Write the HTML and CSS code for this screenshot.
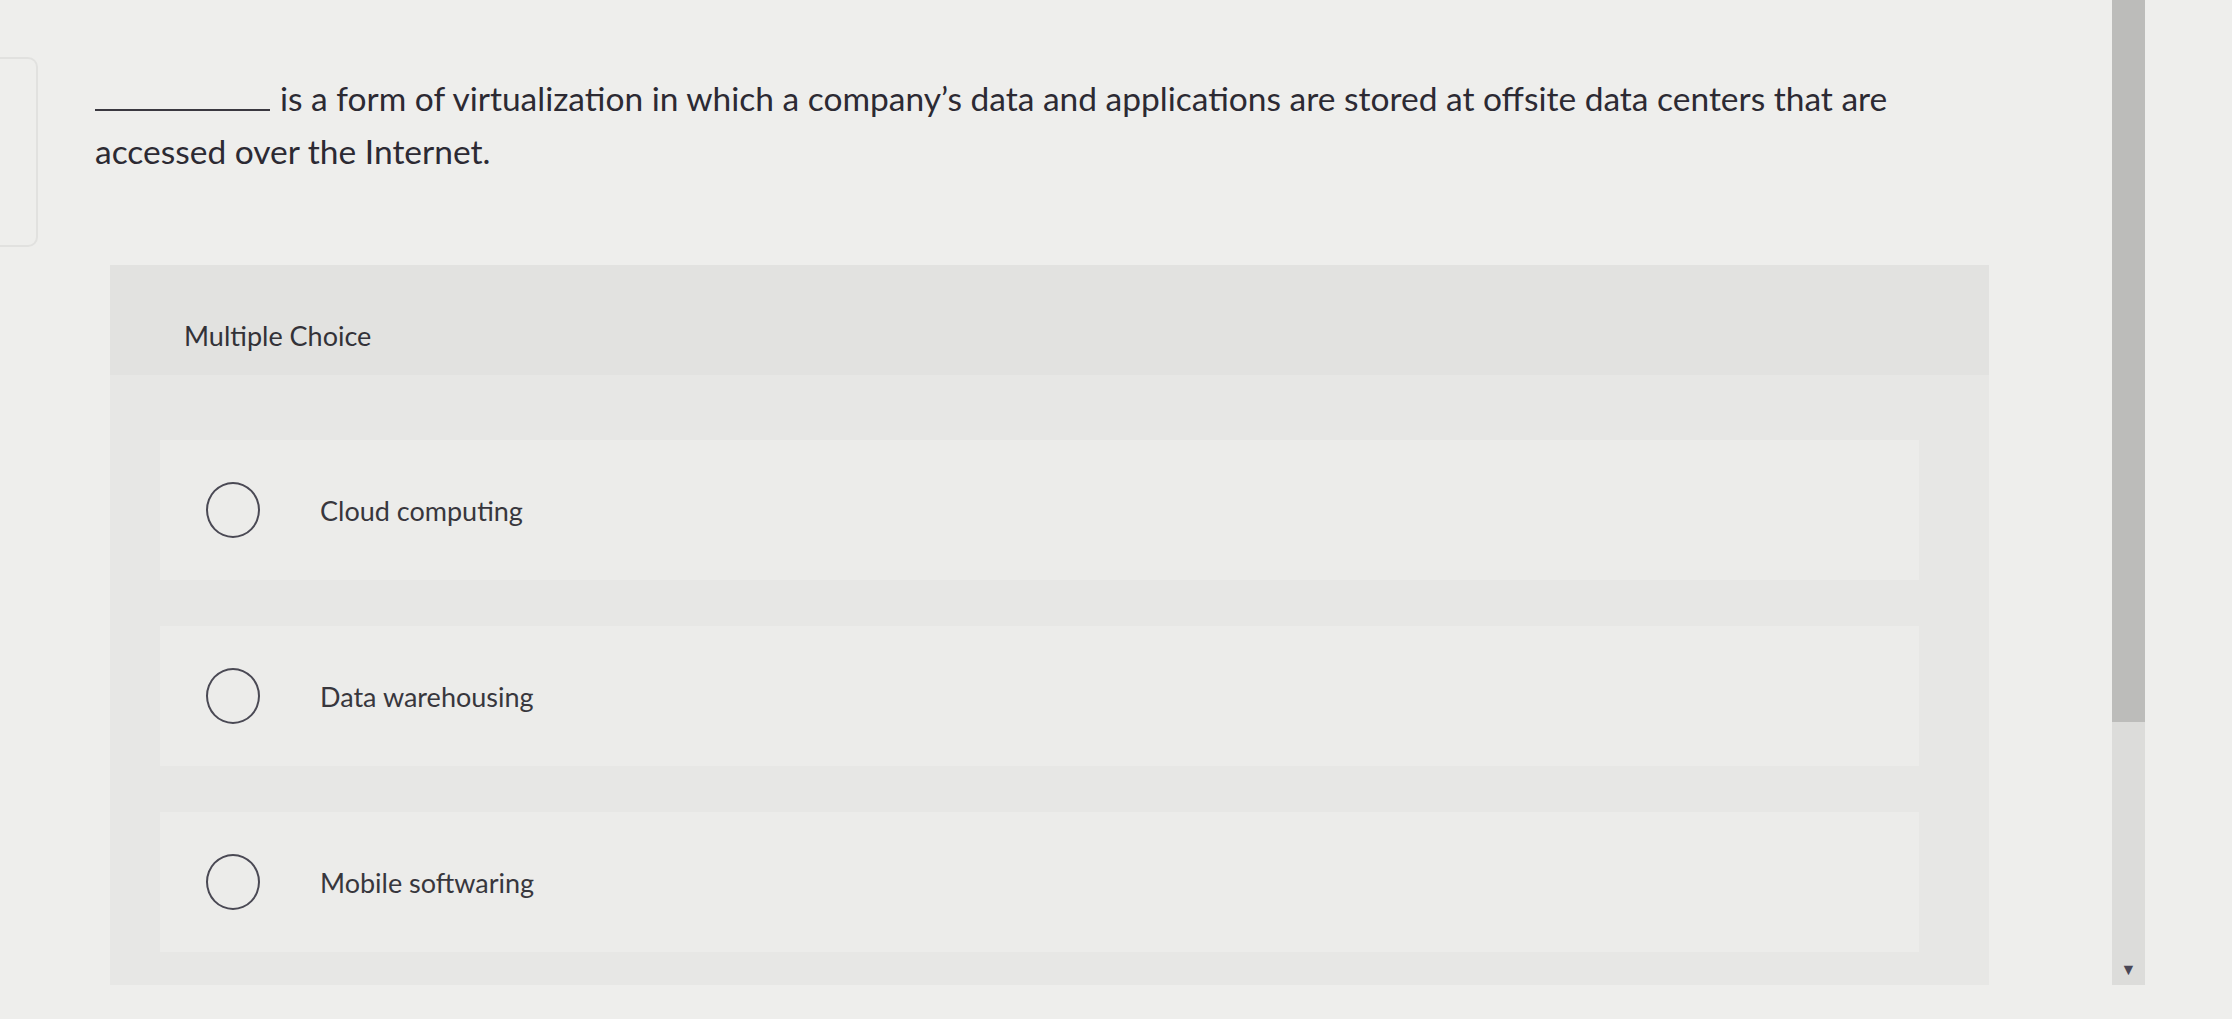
FILE: index.html
```html
<!DOCTYPE html>
<html lang="en">
<head>
<meta charset="utf-8">
<title>Multiple Choice</title>
<link rel="stylesheet" href="styles.css">
</head>
<body>
<div class="page">
  <div class="side-card"></div>
  <main class="content">
    <p class="question"><span class="blank"></span>is a form of virtualization in which a company’s data and applications are stored at offsite data centers that are accessed over the Internet.</p>
    <section class="panel">
      <div class="panel-header">Multiple Choice</div>
      <div class="options">
        <label class="option">
          <span class="radio"></span>
          <span class="option-text">Cloud computing</span>
        </label>
        <label class="option">
          <span class="radio"></span>
          <span class="option-text">Data warehousing</span>
        </label>
        <label class="option">
          <span class="radio"></span>
          <span class="option-text">Mobile softwaring</span>
        </label>
      </div>
    </section>
  </main>
  <div class="scrollbar">
    <div class="thumb"></div>
    <div class="track">
      <span class="arrow">▼</span>
    </div>
  </div>
</div>
</body>
</html>
```
FILE: styles.css
```css
html, body {
  margin: 0;
  padding: 0;
}
body {
  background: #eeeeec;
  font-family: Lato, "Open Sans", "Liberation Sans", sans-serif;
  color: #2e2c34;
  width: 2232px;
  height: 1019px;
  overflow: hidden;
}
.page {
  display: flex;
  align-items: flex-start;
  height: 1019px;
}
.side-card {
  flex: 0 0 38px;
  height: 190px;
  margin-top: 57px;
  border: 2px solid #e1e1df;
  border-left: none;
  border-radius: 0 10px 10px 0;
  box-sizing: border-box;
}
.content {
  flex: 0 0 2068px;
  padding-left: 57px;
  padding-top: 72px;
  box-sizing: border-box;
}
.question {
  margin: 0;
  width: 1930px;
  font-size: 33.5px;
  line-height: 53px;
  color: #2c2a33;
}
.blank {
  display: inline-block;
  width: 175px;
  height: 22px;
  border-bottom: 2px solid #3a3840;
  margin-right: 10px;
}
.panel {
  margin-top: 87px;
  margin-left: 15px;
  width: 1879px;
  height: 720px;
  background: #e7e7e5;
  box-sizing: border-box;
  padding: 0 70px 0 50px;
}
.panel-header {
  height: 110px;
  margin: 0 -70px 0 -50px;
  padding: 56px 0 0 74px;
  box-sizing: border-box;
  background: #e2e2e0;
  font-size: 27px;
  line-height: 30px;
  color: #333238;
}
.options {
  display: flex;
  flex-direction: column;
  gap: 46px;
  padding-top: 65px;
}
.option {
  display: flex;
  align-items: center;
  height: 140px;
  background: #ececea;
  padding-left: 46px;
}
.radio {
  flex: 0 0 auto;
  width: 54px;
  height: 56px;
  border: 2px solid #4a4954;
  border-radius: 50%;
  box-sizing: border-box;
  margin-right: 60px;
}
.option-text {
  font-size: 27px;
  color: #38373d;
}
.scrollbar {
  flex: 0 0 33px;
  margin-left: 6px;
  display: flex;
  flex-direction: column;
  height: 985px;
}
.thumb {
  height: 722px;
  background: #bcbcba;
}
.track {
  flex: 1;
  background: #dcdcda;
  display: flex;
  align-items: flex-end;
  justify-content: center;
}
.arrow {
  font-size: 16px;
  line-height: 20px;
  color: #4a4756;
  margin-bottom: 6px;
}
```
